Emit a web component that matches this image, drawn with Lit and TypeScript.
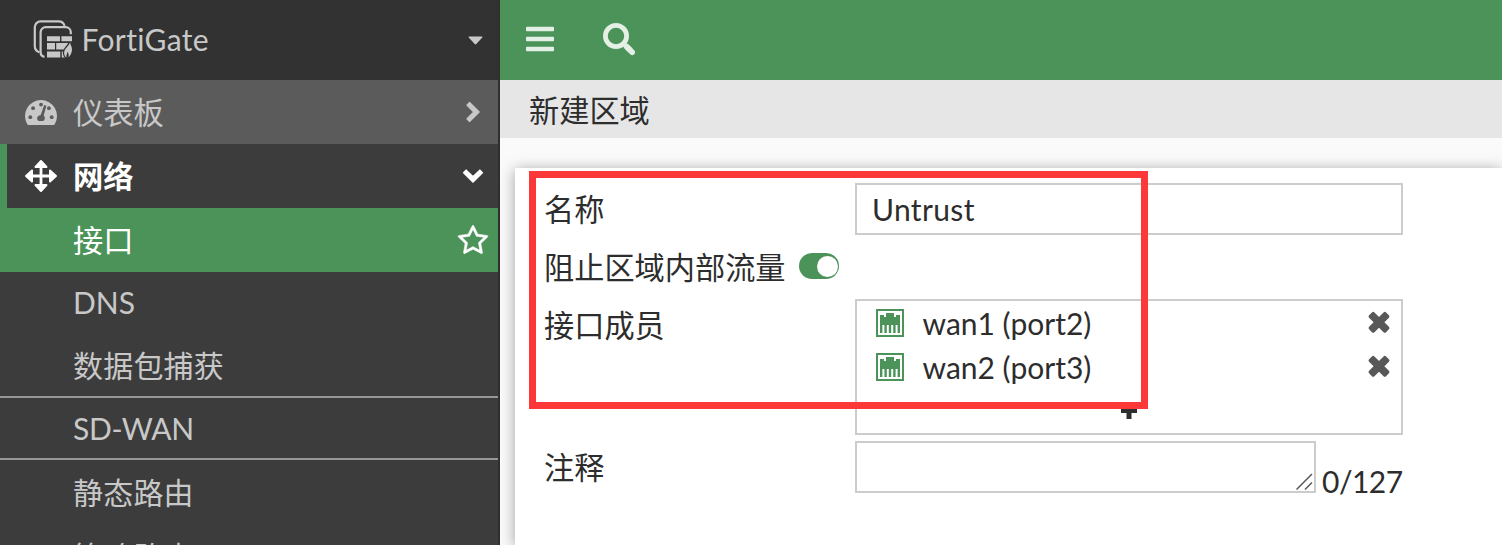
import { LitElement, html, css } from "lit";
import { customElement } from "lit/decorators.js";
import { classMap } from "lit/directives/class-map.js";

const logo = html`<svg width="42" height="42" viewBox="0 0 42 42" fill="none">
  <g stroke="#c8c8c8" stroke-width="2.2">
    <path d="M8.5 33.2A6.500 6.500 0 0 1 3.800 27V8.200A5.800 5.800 0 0 1 9.600 2.400H27.500A6.300 6.300 0 0 1 33.600 6.800" />
    <path d="M13.500 37.800A4.600 4.600 0 0 1 9.600 33.400V13.200A5 5 0 0 1 14.600 8.200H34.800A5 5 0 0 1 39.800 13.200V15.200" />
  </g>
  <g fill="#c8c8c8">
    <path d="M16 17.200h13v5H16zM30.400 17.200H41v5H30.400zM16 24h8v6.600H16zM25.200 24H37v6.600H25.200zM16 32.600h13.300v6H16zM30.800 32.600H37v6H30.800z" />
    <path stroke="#323232" stroke-width="2.600" paint-order="stroke" d="M39 23.200c.4 3 2.200 4.300 2 7.800c-.2 3-1.800 5.800-3.400 7.600c.4-2.800-.2-4.600-1-5.800c-.4 2-1.400 3.200-1.200 5.800c-3-2.600-2.800-6.300-.8-8.900c1.600-2.100 3.500-3.700 4.400-6.500z" />
  </g>
</svg>`;

const gauge = html`<svg width="34" height="34" viewBox="0 0 34 34">
  <path fill="#c8c8c8" d="M4.600 29.900Q3.600 29.900 3.100 29A16 16 0 1 1 30.900 29Q30.400 29.900 29.400 29.900z" />
  <g fill="#5b5b5b">
    <circle cx="6.300" cy="22.200" r="1.900" /><circle cx="9.100" cy="13.200" r="1.900" />
    <circle cx="17" cy="9.600" r="1.900" /><circle cx="24.900" cy="13.200" r="1.900" />
    <circle cx="27.700" cy="22.200" r="1.900" />
    <path d="M20.200 10l2.200.7-2.700 9.900q1.500 1.500 1.100 3.400q-.4 1.700-1.800 1.900h-4.300q-1.600-.4-1.600-2.300q.2-3 3.600-3.700z" />
  </g>
</svg>`;

const move = html`<svg width="34" height="34" viewBox="0 0 34 34" fill="#fff" stroke="#fff" stroke-linejoin="round">
  <path stroke="none" d="M15.600 6h2.800v22h-2.800zM6 15.600h22v2.800H6z" />
  <path stroke-width="2" d="M17 2l5.500 6h-11zM17 32l5.500-6h-11zM2 17l6-5.500v11zM32 17l-6-5.500v11z" />
</svg>`;

const chevron = html`<svg width="24" height="24" viewBox="0 0 24 24" fill="currentColor" stroke="currentColor" stroke-width="1.600" stroke-linejoin="round">
  <path d="M6.200 5.100l2.500-2.400 9.300 9.300-9.300 9.300-2.500-2.400 6.700-6.900z" />
</svg>`;

const star = html`<svg width="32" height="32" viewBox="0 -40 1792 1792" fill="#fff" stroke="#fff" stroke-width="30">
  <path d="M1201 1004l306-297-422-62-189-382-189 382-422 62 306 297-73 421 378-199 377 199zm527-357q0 22-26 48l-363 354 86 500q1 7 1 20 0 50-41 50-19 0-40-12l-449-236-449 236q-22 12-40 12-21 0-31.500-14.500t-10.500-35.500q0-6 2-20l86-500-364-354q-25-27-25-48 0-37 56-46l502-73 225-455q19-41 49-41t49 41l225 455 502 73q56 9 56 46z" />
</svg>`;

const bars = html`<svg width="28" height="26" viewBox="0 0 28 26" fill="#e4efe6">
  <rect y=".7" width="28" height="4.600" rx="1" /><rect y="10.700" width="28" height="4.600" rx="1" /><rect y="20.700" width="28" height="4.600" rx="1" />
</svg>`;

const search = html`<svg width="34" height="34" viewBox="0 0 34 34" fill="none" stroke="#e4efe6">
  <circle cx="14" cy="14" r="10.600" stroke-width="4.800" />
  <path stroke-width="4" d="M21 21l4 4" />
  <path stroke-width="5.600" stroke-linejoin="round" d="M23.500 23.500l5 5" />
  <path stroke-width="5.600" stroke-linecap="round" d="M25.500 25.500l4.700 4.700" />
</svg>`;

const port = html`<svg width="28" height="28" viewBox="0 0 28 28" fill="#4b9359">
  <path fill-rule="evenodd" d="M0 0h28v28H0zM2 2v24h24V2z" />
  <path d="M4 6h4v2h2V4h8v4h2V6h4v18h-2.400v-8h-2v8h-2.400v-8h-2v8h-2.400v-8h-2v8H8.400v-8h-2v8H4z" />
</svg>`;

const cross = html`<svg width="24" height="24" viewBox="-12 -12 24 24" fill="#585858">
  <g transform="translate(0 -.7) rotate(45)"><rect x="-12" y="-3.800" width="24" height="7.600" rx="1.800" /><rect x="-3.800" y="-12" width="7.600" height="24" rx="1.800" /></g>
</svg>`;

type Item = { label: string; kind: string; icon?: unknown; tail?: unknown };

@customElement("side-nav")
class SideNav extends LitElement {
  static styles = css`
    :host { display: flex; flex-direction: column; width: 498px; height: 545px; flex: none; overflow: hidden;
      background: #3c3c3c; border-right: 2px solid #2f2f2f; color: #c8c8c8; }
    svg { display: block; flex: none; }
    .brand { display: flex; align-items: center; height: 80px; flex: none; box-sizing: border-box;
      padding: 0 17px 0 31px; background: #323232; margin-right: -2px; }
    .brand span { flex: 1; margin-left: 8.500px; padding-bottom: 2px; letter-spacing: .35px; }
    .row { display: flex; align-items: center; flex: none; box-sizing: border-box; height: 62px; padding: 0 9px 0 73px; }
    .label { flex: 1; line-height: 36px; }
    .group { height: 64px; padding: 0 13px 0 24px; }
    .group .label { margin-left: 15px; font-size: 30.300px; }
    .closed { background: #5b5b5b; }
    .open { color: #fff; font-weight: 700; border-left: 7px solid #4b9359; padding-left: 17px; }
    .open .tail { transform: rotate(90deg); }
    .active { height: 64px; background: #4b9359; color: #fff; }
    .active .label { font-size: 30.300px; }
    .plain .label { padding-bottom: 2px; }
    .packet .label { letter-spacing: .2px; padding-bottom: 1px; }
    .line { border-top: 2px solid #969696; border-bottom: 2px solid #969696; height: 64px; }
    .line .label { letter-spacing: -.3px; }
    .route { height: 64px; }
    .route .label { padding-bottom: 1px; letter-spacing: .2px; }
  `;
  items: Item[] = [
    { label: "仪表板", kind: "group closed", icon: gauge, tail: chevron },
    { label: "网络", kind: "group open", icon: move, tail: chevron },
    { label: "接口", kind: "active", tail: star },
    { label: "DNS", kind: "plain" },
    { label: "数据包捕获", kind: "packet" },
    { label: "SD-WAN", kind: "line" },
    { label: "静态路由", kind: "route" },
    { label: "策略路由", kind: "route" },
  ];
  render() {
    return html`
      <div class="brand">${logo}<span>FortiGate</span>
        <svg width="15" height="9" viewBox="0 0 15 9" fill="#c8c8c8"><path d="M1.200.5h12.600q1.300 0 .5 1.100L8.300 8.100q-.8.700-1.600 0L.7 1.600Q-.1.500 1.200.5z" /></svg>
      </div>
      ${this.items.map((i) => html`<div class="row ${classMap(Object.fromEntries(i.kind.split(" ").map((k) => [k, true])))}">
        ${i.icon ?? ""}<span class="label">${i.label}</span>${i.tail ? html`<span class="tail">${i.tail}</span>` : ""}
      </div>`)}`;
  }
}

@customElement("zone-form")
class ZoneForm extends LitElement {
  static styles = css`
    :host { display: block; position: relative; flex: 1; margin: 30px 0 0 15px; background: #fff;
      box-shadow: 0 2px 14px rgba(0, 0, 0, .36); color: #2d2d2d; }
    svg { display: block; flex: none; }
    .form { display: flex; flex-direction: column; padding: 15px 0 0 29px; }
    .field { display: flex; align-items: flex-start; }
    .name { flex: none; width: 311px; line-height: 36px; padding-top: 8px; font-size: 30.200px; }
    .box { box-sizing: border-box; width: 548px; border: 2px solid #ccc; background: #fff; }
    .text { height: 52px; padding: 6px 15px; line-height: 36px; letter-spacing: .35px; }
    .toggle-row { height: 64px; align-items: flex-start; }
    .toggle-row .name { width: 242px; padding-top: 14px; white-space: nowrap; }
    .toggle { box-sizing: border-box; width: 40px; height: 26px; margin: 18px 0 0 13px; padding: 2.500px 1.500px; border-radius: 13px;
      background: #4b9359; display: flex; justify-content: flex-end; }
    .knob { width: 21px; height: 21px; border-radius: 50%; background: #fff; }
    .members { height: 136px; padding: 0 10px 0 19px; display: flex; flex-direction: column; }
    .member { display: flex; align-items: center; height: 44px; }
    .member span { flex: 1; margin-left: 18.500px; line-height: 36px; }
    .plus { margin: 14px 0 0 245px; }
    .notes { margin-top: 6px; align-items: flex-start; }
    .area { width: 461px; height: 52px; display: flex; align-items: flex-end; justify-content: flex-end; padding: 1px; }
    .count { margin-left: 6px; padding-top: 22px; line-height: 36px; letter-spacing: -.5px; }
    .mark { position: absolute; left: 14px; top: 3px; width: 619px; height: 238px; box-sizing: border-box; border: 7px solid #fc3838; }
  `;
  ports = ["wan1 (port2)", "wan2 (port3)"];
  render() {
    return html`
      <div class="form">
        <div class="field"><div class="name">名称</div><div class="box text">Untrust</div></div>
        <div class="field toggle-row"><div class="name">阻止区域内部流量</div><div class="toggle"><div class="knob"></div></div></div>
        <div class="field"><div class="name">接口成员</div>
          <div class="box members">
            ${this.ports.map((p) => html`<div class="member">${port}<span>${p}</span>${cross}</div>`)}
            <svg class="plus" width="16" height="16" viewBox="0 0 16 16" fill="#2d2d2d"><path d="M5.500 0h5v6H16v4h-5.500v6h-5v-6H0V6h5.500z" /></svg>
          </div>
        </div>
        <div class="field notes"><div class="name">注释</div>
          <div class="box area"><svg width="17" height="17" viewBox="0 0 17 17" stroke="#585858" stroke-width="1.500"><path d="M.5 16.500L16 1M9 16.500l7-7" /></svg></div>
          <div class="count">0/127</div>
        </div>
      </div>
      <div class="mark"></div>`;
  }
}

@customElement("app-root")
class AppRoot extends LitElement {
  static styles = css`
    :host { display: flex; width: 1502px; height: 545px; overflow: hidden; background: #fafafa;
      font: 30px/36px Lato, "Noto Sans CJK SC", sans-serif; }
    .main { flex: 1; display: flex; flex-direction: column; min-width: 0; overflow: hidden; }
    .bar { display: flex; align-items: center; gap: 48px; height: 80px; flex: none; box-sizing: border-box; padding: 0 26px 2px;
      position: relative; z-index: 1; background: #4b9359; }
    .title { position: relative; z-index: 1; height: 58px; flex: none; box-sizing: border-box; padding: 12px 29px 0; background: #e6e6e6; color: #2d2d2d; font-size: 30.200px; }
  `;
  render() {
    return html`<side-nav></side-nav>
      <div class="main">
        <div class="bar">${bars}${search}</div>
        <div class="title">新建区域</div>
        <zone-form></zone-form>
      </div>`;
  }
}
